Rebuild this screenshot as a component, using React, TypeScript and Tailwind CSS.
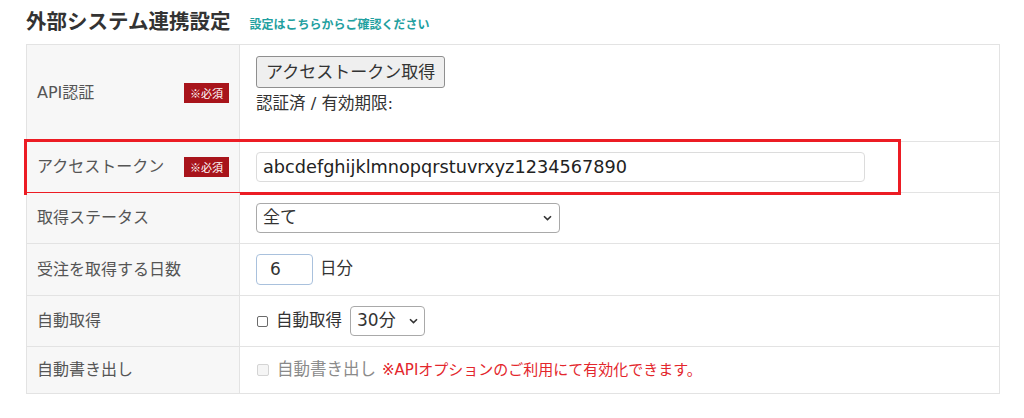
import React from 'react';

const jp = '[font-family:"DejaVu_Sans","Noto_Sans_CJK_JP",sans-serif]';

function Badge() {
  return (
    <span className="flex h-[20px] w-[45px] items-center justify-center bg-[#a8141b] text-[11px] text-white [font-family:'Noto_Sans_CJK_JP',sans-serif]">
      ※必須
    </span>
  );
}

function Chevron() {
  return (
    <svg width="9" height="6" viewBox="0 0 9 6" className="shrink-0">
      <path d="M1 1.2 L4.5 4.6 L8 1.2" fill="none" stroke="#333" strokeWidth="1.6" />
    </svg>
  );
}

function Row({
  label,
  required,
  height,
  children,
  last,
  highlight,
}: {
  label: string;
  required?: boolean;
  height: string;
  children: React.ReactNode;
  last?: boolean;
  highlight?: boolean;
}) {
  return (
    <div className={`relative grid grid-cols-[213px_1fr] ${height} ${last ? '' : 'border-b border-[#e3e3e3]'}`}>
      <div className="flex items-center justify-between border-r border-[#e3e3e3] bg-[#f7f7f7] pl-[10px] pr-[10px]">
        <span className="text-[16px] text-[#555]">{label}</span>
        {required && <Badge />}
      </div>
      <div className="flex items-center pl-[16px]">{children}</div>
      {highlight && (
        <div className="pointer-events-none absolute -left-[3px] -top-[3px] -bottom-[3px] w-[877px] border-[3px] border-[#ec1c24]" />
      )}
    </div>
  );
}

export default function App() {
  return (
    <div className={`h-[418px] w-[1024px] bg-white ${jp} text-[#333]`}>
      {/* heading */}
      <div className="flex h-[44px] items-end pb-[14px] pl-[26px]">
        <h1 className="text-[20.5px] font-bold leading-none text-[#333] [font-family:'Noto_Sans_CJK_JP',sans-serif]">
          外部システム連携設定
        </h1>
        <span className="ml-[19px] text-[12px] font-bold leading-none text-[#1fa0a0] [font-family:'Noto_Sans_CJK_JP',sans-serif]">
          設定はこちらからご確認ください
        </span>
      </div>

      {/* settings table */}
      <div className="ml-[26px] w-[974px] border border-[#e3e3e3]">
        <Row label="API認証" required height="h-[97px]">
          <div className="flex flex-col items-start pb-[16px]">
            <button className="h-[32px] rounded-[3px] border border-[#8f8f8f] bg-[#efefef] px-[9px] text-[17px] leading-none text-[#333]">
              アクセストークン取得
            </button>
            <span className="mt-[6px] text-[16.5px] leading-[20px] text-[#333]">認証済 / 有効期限:</span>
          </div>
        </Row>

        <Row label="アクセストークン" required height="h-[51px]" highlight>
          <div className="flex h-[30px] w-[609px] items-center rounded-[4px] border border-[#dcdcdc] px-[6px] text-[17.7px] text-[#222]">
            abcdefghijklmnopqrstuvrxyz1234567890
          </div>
        </Row>

        <Row label="取得ステータス" height="h-[51px]">
          <div className="flex h-[30px] w-[304px] items-center justify-between rounded-[4px] border border-[#a9a9a9] pl-[6px] pr-[7px] text-[17px] text-[#333]">
            <span>全て</span>
            <Chevron />
          </div>
        </Row>

        <Row label="受注を取得する日数" height="h-[52px]">
          <div className="flex items-center gap-[7px]">
            <div className="flex h-[31px] w-[57px] items-center rounded-[4px] border border-[#a9c1dd] pl-[13px] text-[17px] text-[#333]">
              6
            </div>
            <span className="text-[16.5px]">日分</span>
          </div>
        </Row>

        <Row label="自動取得" height="h-[51px]">
          <div className="flex items-center">
            <span className="ml-[1px] h-[11px] w-[11px] rounded-[2px] border border-[#6b6b6b]" />
            <span className="ml-[8px] text-[16.5px]">自動取得</span>
            <div className="ml-[8px] flex h-[30px] w-[75px] items-center justify-between rounded-[4px] border border-[#a9a9a9] pl-[6px] pr-[6px] text-[17px] text-[#333]">
              <span>30分</span>
              <Chevron />
            </div>
          </div>
        </Row>

        <Row label="自動書き出し" height="h-[46px]" last>
          <div className="flex items-center">
            <span className="ml-[1px] h-[12px] w-[12px] rounded-[2px] border border-[#d4d4d4] bg-[#f5f5f5]" />
            <span className="ml-[8px] text-[16.5px] text-[#8a8a8a]">自動書き出し</span>
            <span className="ml-[6px] text-[15px] text-[#e3262c]">※APIオプションのご利用にて有効化できます。</span>
          </div>
        </Row>
      </div>
    </div>
  );
}
